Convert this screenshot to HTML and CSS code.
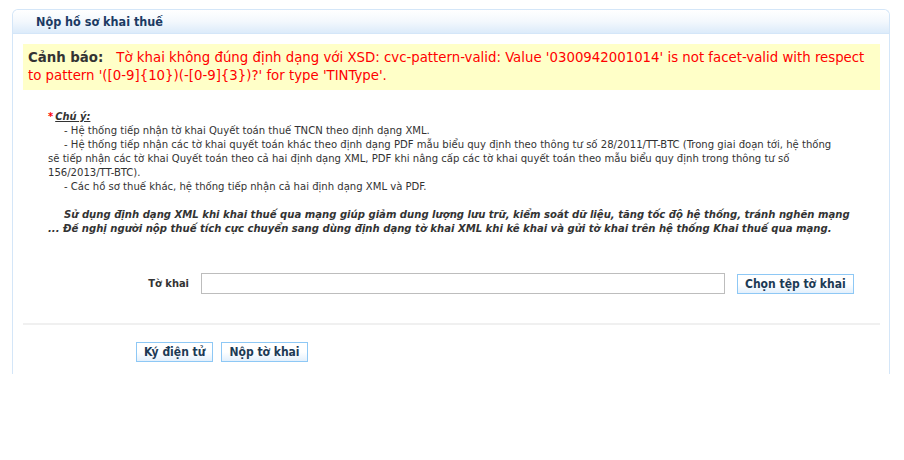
FILE: index.html
```html
<!DOCTYPE html>
<html lang="vi">
<head>
<meta charset="utf-8">
<title>Nộp hồ sơ khai thuế</title>
<link rel="stylesheet" href="styles.css">
</head>
<body>
<div class="panel">
  <div class="panel-header">Nộp hồ sơ khai thuế</div>
  <div class="panel-body">
    <div class="warn"><b class="warn-label">Cảnh báo:</b><span class="warn-text">Tờ khai không đúng định dạng với XSD: cvc-pattern-valid: Value '0300942001014' is not facet-valid with respect to pattern '([0-9]{10})(-[0-9]{3})?' for type 'TINType'.</span></div>
    <div class="note">
      <div class="note-title"><span class="star">*</span><u>Chú ý:</u></div>
      <p class="ind">- Hệ thống tiếp nhận tờ khai Quyết toán thuế TNCN theo định dạng XML.</p>
      <p class="ind">- Hệ thống tiếp nhận các tờ khai quyết toán khác theo định dạng PDF mẫu biểu quy định theo thông tư số 28/2011/TT-BTC (Trong giai đoạn tới, hệ thống sẽ tiếp nhận các tờ khai Quyết toán theo cả hai định dạng XML, PDF khi nâng cấp các tờ khai quyết toán theo mẫu biểu quy định trong thông tư số 156/2013/TT-BTC).</p>
      <p class="ind">- Các hồ sơ thuế khác, hệ thống tiếp nhận cả hai định dạng XML và PDF.</p>
      <p class="ind emph">Sử dụng định dạng XML khi khai thuế qua mạng giúp giảm dung lượng lưu trữ, kiểm soát dữ liệu, tăng tốc độ hệ thống, tránh nghẽn mạng ... Đề nghị người nộp thuế tích cực chuyển sang dùng định dạng tờ khai XML khi kê khai và gửi tờ khai trên hệ thống Khai thuế qua mạng.</p>
    </div>
    <div class="form-row">
      <label class="form-label">Tờ khai</label>
      <input class="file-input" type="text">
      <button class="btn">Chọn tệp tờ khai</button>
    </div>
    <div class="sep"></div>
    <div class="actions">
      <button class="btn">Ký điện tử</button>
      <button class="btn">Nộp tờ khai</button>
    </div>
  </div>
</div>
</body>
</html>
```
FILE: styles.css
```css
html, body {
  margin: 0;
  padding: 0;
  background: #fff;
}
body {
  font-family: "DejaVu Sans Condensed", "DejaVu Sans", sans-serif;
  font-size: 11px;
  color: #333;
}
.panel {
  margin: 9px 0 0 12px;
  width: 876px;
  height: 364px;
  border: 1px solid #d4e6f8;
  border-bottom: none;
  border-radius: 6px 6px 0 0;
}
.panel-header {
  height: 23px;
  line-height: 24px;
  padding-left: 23px;
  font-size: 12.5px;
  font-weight: bold;
  color: #1b3a63;
  background: linear-gradient(#ffffff, #f3f8fd 50%, #dcebfa);
  border-bottom: 1px solid #d4e6f8;
  border-radius: 6px 6px 0 0;
}
.panel-body {
  padding: 10px 9px 0 10px;
}
.warn {
  background: #ffffc8;
  padding: 4px 4px 6px 5px;
  font-size: 14.8px;
  line-height: 18px;
  color: #ff0000;
}
.warn-label {
  color: #333;
  margin-right: 13px;
}
.note {
  padding: 20px 0 0 25px;
  line-height: 14px;
}
.note p {
  margin: 0 38px 0 0;
  font-size: 11.2px;
}
.note-title {
  font-weight: bold;
  font-style: italic;
}
.star {
  color: #ff0000;
  font-style: normal;
  margin-right: 2px;
}
.ind {
  text-indent: 16px;
}
.note .emph {
  margin: 14px 20px 0 0;
  font-size: 11.2px;
  font-weight: bold;
  font-style: italic;
  line-height: 13.5px;
}
.form-row {
  display: flex;
  align-items: center;
  gap: 12px;
  margin-top: 38px;
}
.form-label {
  width: 166px;
  text-align: right;
  font-weight: bold;
}
.file-input {
  width: 520px;
  height: 17px;
  margin: 0;
  border: 1px solid #bdbdbd;
  padding: 1px;
}
.btn {
  margin: 0;
  height: 20px;
  padding: 0 7px;
  font-family: inherit;
  font-size: 12px;
  font-weight: bold;
  color: #1c3a55;
  border: 1px solid #8ec8f5;
  background: linear-gradient(#ffffff, #ffffff 50%, #e3f0fc);
  border-radius: 0;
}
.sep {
  height: 2px;
  background: #f0f0f0;
  margin-top: 29px;
}
.actions {
  display: flex;
  gap: 8px;
  padding-left: 113px;
  margin-top: 17px;
}
```
